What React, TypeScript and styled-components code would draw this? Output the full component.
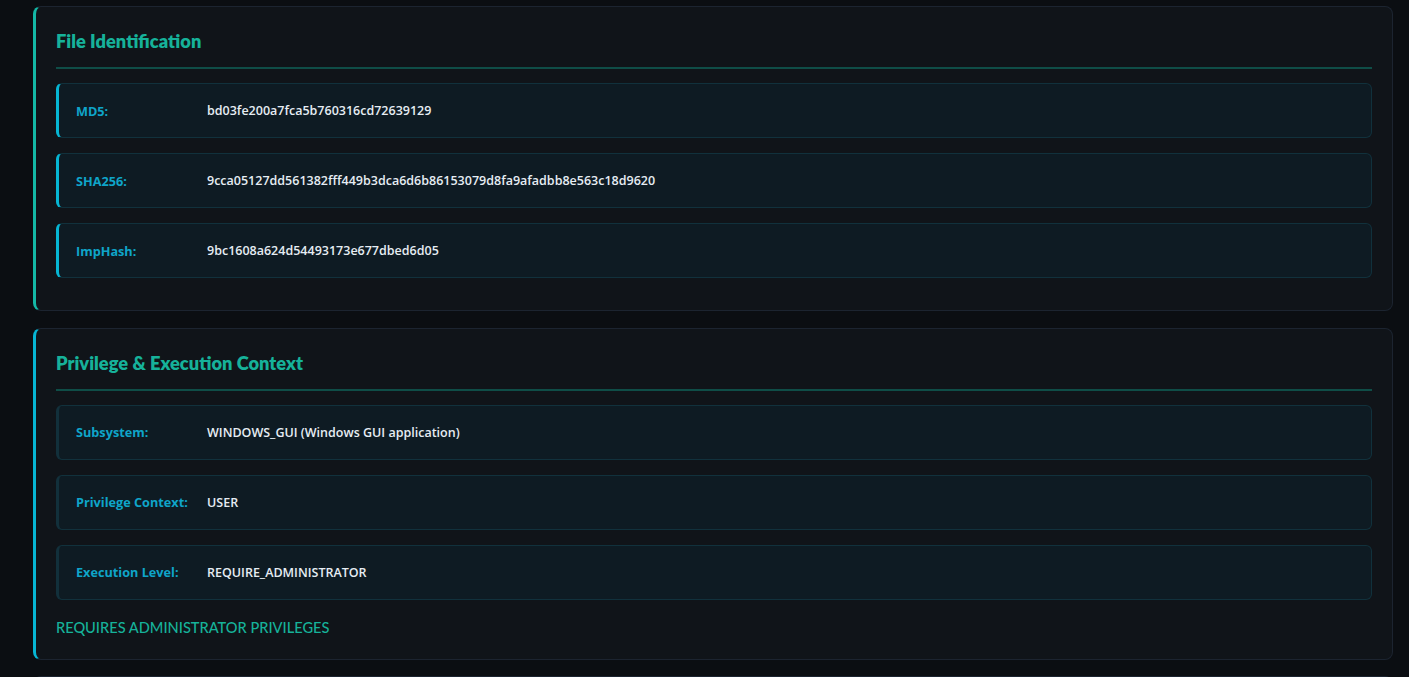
import React from "react";
import styled, { createGlobalStyle } from "styled-components";

const GlobalStyle = createGlobalStyle`
  html, body {
    margin: 0;
    padding: 0;
    background: #0b0e12;
    font-family: Lato, "Open Sans", "Noto Sans", sans-serif;
  }
  * { box-sizing: border-box; }
`;

const Page = styled.div`
  display: flex;
  flex-direction: column;
  gap: 16.5px;
  padding: 6px 16px 0 33px;
  height: 677px;
  overflow: hidden;
`;

const Card = styled.section<{ $accent: string }>`
  flex-shrink: 0;
  background: #101419;
  border: 1px solid #1c2430;
  border-left: 3px solid ${(p) => p.$accent};
  border-radius: 8px;
  padding: 22px 20px 20px 20px;
  min-height: 40px;
`;

const Title = styled.h2`
  margin: 0 0 14px 0;
  padding-bottom: 14px;
  border-bottom: 2px solid #0f4d47;
  font-family: Lato, sans-serif;
  font-size: 18.3px;
  line-height: 24px;
  font-weight: 800;
  color: #16b29a;
`;

const List = styled.div`
  display: flex;
  flex-direction: column;
  gap: 15px;
  margin-bottom: 12px;
`;

const Row = styled.div<{ $accent?: string }>`
  display: grid;
  grid-template-columns: 119px 1fr;
  column-gap: 12px;
  align-items: center;
  height: 55px;
  padding: 0 16px 0 17px;
  background: #0e1b23;
  border: 1px solid #11313c;
  border-left: 3px solid ${(p) => p.$accent ?? "#12303b"};
  border-radius: 6px;
`;

const Label = styled.span`
  font-family: "Open Sans", sans-serif;
  font-size: 12.7px;
  font-weight: 700;
  color: #0ea5c9;
  white-space: nowrap;
`;

const Value = styled.span`
  font-family: "Open Sans", sans-serif;
  font-size: 12.5px;
  font-weight: 600;
  color: #e6edf3;
  white-space: nowrap;
`;

const Note = styled.div`
  padding-top: 5px;
  font-family: Lato, sans-serif;
  font-size: 14.6px;
  line-height: 22px;
  font-weight: 500;
  color: #16b29a;
  text-transform: uppercase;
`;

type Item = { label: string; value: string };

const fileItems: Item[] = [
  { label: "MD5:", value: "bd03fe200a7fca5b760316cd72639129" },
  {
    label: "SHA256:",
    value: "9cca05127dd561382fff449b3dca6d6b86153079d8fa9afadbb8e563c18d9620",
  },
  { label: "ImpHash:", value: "9bc1608a624d54493173e677dbed6d05" },
];

const privItems: Item[] = [
  { label: "Subsystem:", value: "WINDOWS_GUI (Windows GUI application)" },
  { label: "Privilege Context:", value: "USER" },
  { label: "Execution Level:", value: "REQUIRE_ADMINISTRATOR" },
];

export default function App() {
  return (
    <>
      <GlobalStyle />
      <Page>
        <Card $accent="#14b8a6">
          <Title>File Identification</Title>
          <List>
            {fileItems.map((it) => (
              <Row key={it.label} $accent="#06b6d4">
                <Label>{it.label}</Label>
                <Value>{it.value}</Value>
              </Row>
            ))}
          </List>
        </Card>
        <Card $accent="#06b6d4">
          <Title>Privilege &amp; Execution Context</Title>
          <List>
            {privItems.map((it) => (
              <Row key={it.label}>
                <Label>{it.label}</Label>
                <Value>{it.value}</Value>
              </Row>
            ))}
          </List>
          <Note>Requires Administrator Privileges</Note>
        </Card>
        <Card $accent="#14b8a6" />
      </Page>
    </>
  );
}
